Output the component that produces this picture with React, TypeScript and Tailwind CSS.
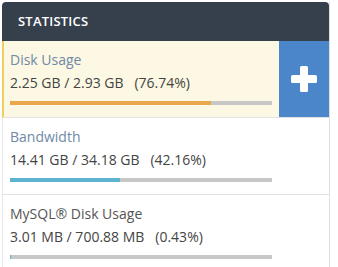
import React from 'react';

type Stat = {
  label: string;
  value: string;
  percent: number;
  color: string;
  highlight?: boolean;
};

const stats: Stat[] = [
  { label: 'Disk Usage', value: '2.25 GB / 2.93 GB', percent: 76.74, color: '#e9a84a', highlight: true },
  { label: 'Bandwidth', value: '14.41 GB / 34.18 GB', percent: 42.16, color: '#5bb3cf' },
  { label: 'MySQL® Disk Usage', value: '3.01 MB / 700.88 MB', percent: 0.43, color: '#5bb3cf' },
];

const StatRow: React.FC<{ stat: Stat }> = ({ stat }) => (
  <div
    className={
      stat.highlight
        ? 'flex bg-[#fcf8e3] border-l-2 border-[#efcf5d] border-b border-b-[#e2e2e2]'
        : 'flex border-b border-[#e2e2e2] border-l border-l-[#e6e6e6]'
    }
  >
    <div className={stat.highlight ? 'flex-1 pl-[6px] pt-2 pb-[12px]' : 'flex-1 pl-[7px] pt-2 pb-[12px]'}>
      <div className={stat.label.startsWith('MySQL') ? 'text-[14px] leading-[22px] text-[#555]' : 'text-[14px] leading-[22px] text-[#6f89a6]'}>
        {stat.label}
      </div>
      <div className="text-[14px] leading-[23px] text-[#444] whitespace-pre">
        {stat.value}{'   '}({stat.percent.toFixed(2)}%)
      </div>
      <div className="mt-[7px] h-[4px] w-[262px] bg-[#c7c7c7]">
        <div className="h-full" style={{ width: `${stat.percent}%`, backgroundColor: stat.color }} />
      </div>
    </div>
    {stat.highlight && (
      <div className="w-[50px] bg-[#4a86c9] flex items-center justify-center">
        <svg width="26" height="26" viewBox="0 0 26 26">
          <rect x="9" y="0" width="8" height="26" rx="1.5" fill="#fff" />
          <rect x="0" y="9" width="26" height="8" rx="1.5" fill="#fff" />
        </svg>
      </div>
    )}
  </div>
);

export default function App() {
  return (
    <div className="w-[338px] h-[267px] bg-white overflow-hidden pt-[2px] pl-[2px]" style={{ fontFamily: '"Open Sans", sans-serif' }}>
      <div className="w-[328px] border-r border-[#e0e0e0]">
        <div className="h-[39px] bg-[#36404d] rounded-t-[4px] flex items-center pl-4 text-white text-[13px] font-semibold tracking-[0.2px]">
          STATISTICS
        </div>
        {stats.map((s) => (
          <StatRow key={s.label} stat={s} />
        ))}
      </div>
    </div>
  );
}
